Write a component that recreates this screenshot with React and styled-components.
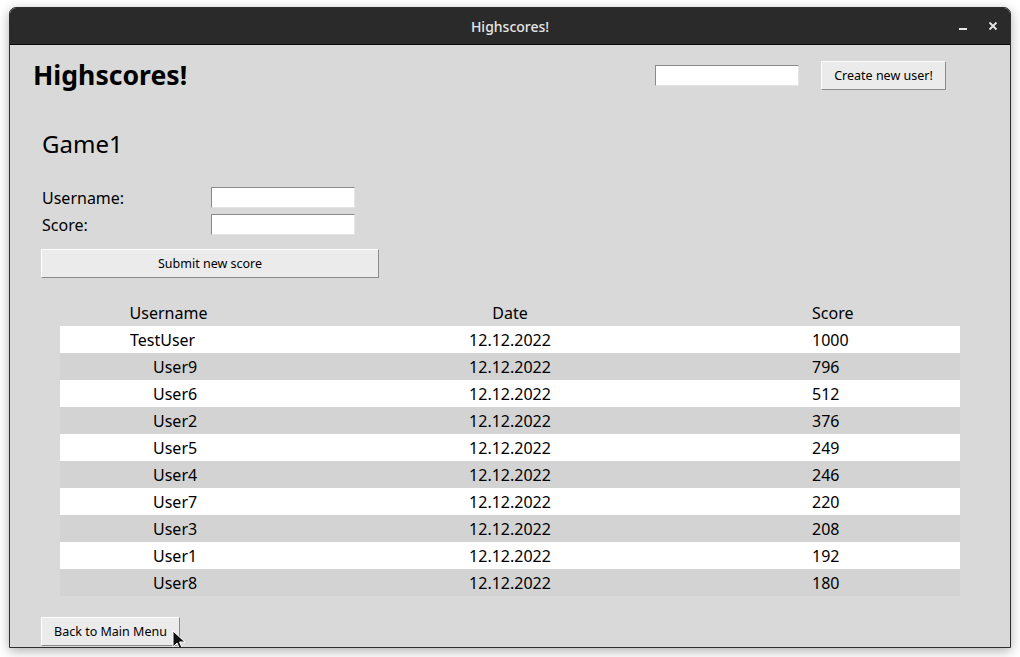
import React from "react";
import styled, { createGlobalStyle } from "styled-components";

const GlobalStyle = createGlobalStyle`
  html, body {
    margin: 0;
    padding: 0;
    background: #ffffff;
    font-family: "Noto Sans", "DejaVu Sans", sans-serif;
  }
  * { box-sizing: border-box; }
`;

// Window chrome
const Screen = styled.div`
  width: 1020px;
  height: 657px;
  padding: 7px 0 0 9px;
  overflow: hidden;
`;

const Window = styled.div`
  width: 1002px;
  height: 641px;
  border: 1px solid #2e2e2e;
  border-radius: 7px 7px 0 0;
  background: #d9d9d9;
  box-shadow: 0 3px 12px rgba(0, 0, 0, 0.32);
  display: flex;
  flex-direction: column;
  overflow: hidden;
  position: relative;
`;

const TitleBar = styled.div`
  height: 37px;
  flex-shrink: 0;
  background: #2a2a2a;
  border-bottom: 1px solid #0c0c0c;
  display: flex;
  align-items: center;
  justify-content: center;
  position: relative;
  color: #e6e6e6;
  font-size: 14px;
  font-weight: 500;
`;

const WindowControls = styled.div`
  position: absolute;
  right: 12px;
  top: 0;
  height: 36px;
  display: flex;
  align-items: center;
  gap: 20px;
`;

const Content = styled.div`
  flex: 1;
  display: flex;
  flex-direction: column;
  padding: 16px 0 0 0;
  color: #000;
`;

// Header
const Header = styled.div`
  height: 29px;
  display: flex;
  align-items: center;
  justify-content: space-between;
  padding: 0 64px 0 23px;
`;

const AppTitle = styled.h1`
  margin: 0;
  font-size: 26.6px;
  line-height: 29px;
  font-weight: 700;
  color: #000;
`;

const HeaderTools = styled.div`
  display: flex;
  align-items: center;
  gap: 22px;
`;

const Entry = styled.input`
  width: ${(p) => p.$w || 144}px;
  height: 21px;
  margin: 0;
  padding: 0 3px;
  background: #ffffff;
  border-style: solid;
  border-width: 1px;
  border-color: #8a8a8a #e4e4e4 #e4e4e4 #8a8a8a;
  font-family: inherit;
  font-size: 13px;
  outline: none;
`;

const Button = styled.button`
  width: ${(p) => p.$w}px;
  height: 29px;
  margin: 0;
  padding: 0;
  background: #ebebeb;
  border-style: solid;
  border-width: 1px;
  border-color: #ffffff #8a8a8a #8a8a8a #ffffff;
  font-family: "Noto Sans", sans-serif;
  font-size: 12.5px;
  color: #000;
  cursor: default;
`;

// Game section
const GameSection = styled.section`
  display: flex;
  flex-direction: column;
  align-items: flex-start;
  padding-left: 31px;
`;

const GameTitle = styled.h2`
  margin: 38px 0 0 1px;
  font-size: 24px;
  line-height: 32px;
  font-weight: 400;
  color: #000;
`;

const Form = styled.div`
  margin-top: 26px;
  margin-left: 1px;
  display: grid;
  grid-template-columns: 169px 144px;
  grid-auto-rows: 23px;
  row-gap: 4px;
  align-items: center;
`;

const Label = styled.label`
  font-size: 16px;
  line-height: 23px;
  padding-top: 1px;
`;

const SubmitButton = styled(Button)`
  margin-top: 13px;
`;

// Table
const Table = styled.div`
  margin: 21px 0 0 50px;
  width: 900px;
  display: flex;
  flex-direction: column;
`;

const Row = styled.div`
  display: grid;
  grid-template-columns: 217px 466px 217px;
  height: 27px;
  padding-top: 2px;
  align-items: center;
  font-size: 16px;
  line-height: 25px;
  background: ${(p) => (p.$head ? "transparent" : p.$odd ? "#d3d3d3" : "#ffffff")};
`;

const Cell = styled.div`
  text-align: ${(p) => p.$align || "left"};
  padding-left: ${(p) => p.$indent || 0}px;
  white-space: pre;
`;

const Footer = styled.div`
  margin-top: 21px;
  padding-left: 31px;
`;

const Cursor = styled.svg`
  position: absolute;
  left: 162px;
  top: 622px;
  pointer-events: none;
`;

const scores = [
  { name: "TestUser", date: "12.12.2022", score: 1000 },
  { name: "User9", date: "12.12.2022", score: 796 },
  { name: "User6", date: "12.12.2022", score: 512 },
  { name: "User2", date: "12.12.2022", score: 376 },
  { name: "User5", date: "12.12.2022", score: 249 },
  { name: "User4", date: "12.12.2022", score: 246 },
  { name: "User7", date: "12.12.2022", score: 220 },
  { name: "User3", date: "12.12.2022", score: 208 },
  { name: "User1", date: "12.12.2022", score: 192 },
  { name: "User8", date: "12.12.2022", score: 180 },
];

export default function App() {
  return (
    <Screen>
      <GlobalStyle />
      <Window>
        <TitleBar>
          Highscores!
          <WindowControls>
            <svg width="10" height="10" viewBox="0 0 10 10">
              <rect x="1" y="7" width="8" height="2" fill="#e6e6e6" />
            </svg>
            <svg width="10" height="10" viewBox="0 0 10 10">
              <path d="M1.5 1.5 L8.5 8.5 M8.5 1.5 L1.5 8.5" stroke="#e6e6e6" strokeWidth="1.8" />
            </svg>
          </WindowControls>
        </TitleBar>

        <Content>
          <Header>
            <AppTitle>Highscores!</AppTitle>
            <HeaderTools>
              <Entry $w={144} />
              <Button $w={125}>Create new user!</Button>
            </HeaderTools>
          </Header>

          <GameSection>
            <GameTitle>Game1</GameTitle>
            <Form>
              <Label>Username:</Label>
              <Entry />
              <Label>Score:</Label>
              <Entry />
            </Form>
            <SubmitButton $w={338}>Submit new score</SubmitButton>
          </GameSection>

          <Table>
            <Row $head>
              <Cell $align="center">Username</Cell>
              <Cell $align="center">Date</Cell>
              <Cell $indent={69}>Score</Cell>
            </Row>
            {scores.map((s, i) => (
              <Row key={s.name} $odd={i % 2 === 1}>
                <Cell $indent={i === 0 ? 70 : 93}>{s.name}</Cell>
                <Cell $align="center">{s.date}</Cell>
                <Cell $indent={69}>{s.score}</Cell>
              </Row>
            ))}
          </Table>

          <Footer>
            <Button $w={139}>Back to Main Menu</Button>
          </Footer>
        </Content>

        <Cursor width="14" height="22" viewBox="0 0 14 22">
          <path
            d="M1 1 L1 17 L5 13 L8 20 L10.5 19 L7.5 12 L13 12 Z"
            fill="#111"
            stroke="#fff"
            strokeWidth="1"
            strokeLinejoin="round"
          />
        </Cursor>
      </Window>
    </Screen>
  );
}
